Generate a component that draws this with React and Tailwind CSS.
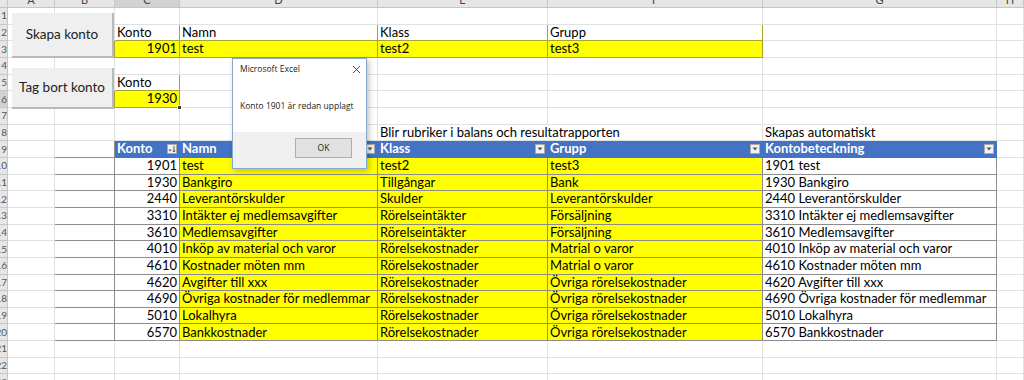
import React from 'react';

const font = { fontFamily: 'Lato, "Open Sans", sans-serif' };

const colW = ['w-[47px]', 'w-[60px]', 'w-[65px]', 'w-[198px]', 'w-[170px]', 'w-[215px]', 'w-[234px]', 'w-[27px]'];
const letters = ['A', 'B', 'C', 'D', 'E', 'F', 'G', 'H'];

const tableRows = [
  ['1901', 'test', 'test2', 'test3', '1901 test'],
  ['1930', 'Bankgiro', 'Tillgångar', 'Bank', '1930 Bankgiro'],
  ['2440', 'Leverantörskulder', 'Skulder', 'Leverantörskulder', '2440 Leverantörskulder'],
  ['3310', 'Intäkter ej medlemsavgifter', 'Rörelseintäkter', 'Försäljning', '3310 Intäkter ej medlemsavgifter'],
  ['3610', 'Medlemsavgifter', 'Rörelseintäkter', 'Försäljning', '3610 Medlemsavgifter'],
  ['4010', 'Inköp av material och varor', 'Rörelsekostnader', 'Matrial o varor', '4010 Inköp av material och varor'],
  ['4610', 'Kostnader möten mm', 'Rörelsekostnader', 'Matrial o varor', '4610 Kostnader möten mm'],
  ['4620', 'Avgifter till xxx', 'Rörelsekostnader', 'Övriga rörelsekostnader', '4620 Avgifter till xxx'],
  ['4690', 'Övriga kostnader för medlemmar', 'Rörelsekostnader', 'Övriga rörelsekostnader', '4690 Övriga kostnader för medlemmar'],
  ['5010', 'Lokalhyra', 'Rörelsekostnader', 'Övriga rörelsekostnader', '5010 Lokalhyra'],
  ['6570', 'Bankkostnader', 'Rörelsekostnader', 'Övriga rörelsekostnader', '6570 Bankkostnader'],
];

// one spreadsheet cell
const Cell = ({ i, children, className = '', right }) => (
  <div
    className={`${colW[i]} shrink-0 h-full flex items-center px-[2px] border-r border-b whitespace-nowrap text-[13px] text-black ${right ? 'justify-end' : ''} ${className || 'border-[#e1e1e1]'}`}
  >
    {children}
  </div>
);

const RowHead = ({ n, active }) => (
  <div className={`w-[8px] shrink-0 h-full flex items-center justify-end overflow-hidden border-r border-b border-[#c6c6c6] text-[10px] text-[#555] ${active ? 'bg-[#d2d2d2]' : 'bg-[#e6e6e6]'}`}>
    <span className="whitespace-nowrap">{n}</span>
  </div>
);

const Row = ({ n, active, children }) => (
  <div className="flex h-[16.67px]">
    <RowHead n={n} active={active} />
    {children}
  </div>
);

const FilterBtn = ({ sort }) => (
  <div className="ml-auto w-[10px] h-[10px] shrink-0 bg-[#f3f3f3] border border-[#a9a9a9] flex items-center justify-center">
    {sort ? (
      <svg width="8" height="8" viewBox="0 0 8 8">
        <path d="M0.5 4.5h3l-1.5 2z" fill="#444" />
        <path d="M6 1v6M4.8 5.6L6 7l1.2-1.4" stroke="#444" strokeWidth="0.9" fill="none" />
      </svg>
    ) : (
      <svg width="6" height="4" viewBox="0 0 6 4">
        <path d="M0.5 0.5h5l-2.5 3z" fill="#555" />
      </svg>
    )}
  </div>
);

const plain = (from, to) =>
  letters.slice(from, to).map((_, k) => <Cell key={k + from} i={k + from} />);

const tb = 'border-[#8c8c8c]';
const yl = 'bg-[#ffff00] border-[#a6a62e]';

const App = () => (
  <div className="relative w-[1024px] h-[380px] overflow-hidden bg-white" style={font}>
    {/* column letters */}
    <div className="flex h-[8px]">
      <div className="w-[8px] shrink-0 h-full bg-[#e6e6e6] border-r border-b border-[#c6c6c6]" />
      {letters.map((l, i) => (
        <div
          key={l}
          className={`${colW[i]} shrink-0 h-full overflow-hidden flex justify-center border-r border-b border-[#c6c6c6] text-[11px] text-[#444] ${i === 2 ? 'bg-[#d2d2d2]' : 'bg-[#e6e6e6]'}`}
        >
          <span className="block leading-[14px] -mt-[7px]">{l}</span>
        </div>
      ))}
    </div>

    <Row n="1">{plain(0, 8)}</Row>
    <Row n="2">
      <Cell i={0} />
      <Cell i={1} />
      <Cell i={2} className="border-[#a6a62e]">Konto</Cell>
      <Cell i={3} className="border-[#a6a62e]">Namn</Cell>
      <Cell i={4} className="border-[#a6a62e]">Klass</Cell>
      <Cell i={5} className="border-[#a6a62e]">Grupp</Cell>
      <Cell i={6} />
      <Cell i={7} />
    </Row>
    <Row n="3">
      <Cell i={0} />
      <Cell i={1} className="border-[#a6a62e]" />
      <Cell i={2} right className={yl}>1901</Cell>
      <Cell i={3} className={yl}>test</Cell>
      <Cell i={4} className={yl}>test2</Cell>
      <Cell i={5} className={yl}>test3</Cell>
      <Cell i={6} />
      <Cell i={7} />
    </Row>
    <Row n="4">{plain(0, 8)}</Row>
    <Row n="5">
      <Cell i={0} />
      <Cell i={1} />
      <Cell i={2} className="border-[#a6a62e]">Konto</Cell>
      {plain(3, 8)}
    </Row>
    <Row n="6" active>
      <Cell i={0} />
      <Cell i={1} className="border-[#a6a62e]" />
      <Cell i={2} right className={`${yl} relative`}>
        1930
        <span className="absolute -right-[3px] -bottom-[3px] w-[5px] h-[5px] bg-[#3a3a3a] border border-white" />
      </Cell>
      {plain(3, 8)}
    </Row>
    <Row n="7">{plain(0, 8)}</Row>
    <Row n="8">
      <Cell i={0} />
      <Cell i={1} />
      <Cell i={2} />
      <Cell i={3} />
      <Cell i={4} className="border-b-[#e1e1e1] border-r-transparent overflow-visible">
        <span className="relative z-10">Blir rubriker i balans och resultatrapporten</span>
      </Cell>
      <Cell i={5} />
      <Cell i={6}>Skapas automatiskt</Cell>
      <Cell i={7} />
    </Row>
    <Row n="9">
      <Cell i={0} />
      <Cell i={1} className={tb} />
      {['Konto', 'Namn', 'Klass', 'Grupp', 'Kontobeteckning'].map((h, k) => (
        <Cell key={h} i={k + 2} className="bg-[#4472c4] border-[#4472c4] font-bold text-white">
          <span className="text-white">{h}</span>
          <FilterBtn sort={k === 0} />
        </Cell>
      ))}
      <Cell i={7} />
    </Row>
    {tableRows.map((r, j) => (
      <Row key={r[0]} n={String(10 + j)}>
        <Cell i={0} />
        <Cell i={1} className={tb} />
        <Cell i={2} right className={tb}>{r[0]}</Cell>
        <Cell i={3} className={`${tb} bg-[#ffff00]`}>{r[1]}</Cell>
        <Cell i={4} className={`${tb} bg-[#ffff00]`}>{r[2]}</Cell>
        <Cell i={5} className={`${tb} bg-[#ffff00]`}>{r[3]}</Cell>
        <Cell i={6} className={tb}>{r[4]}</Cell>
        <Cell i={7} />
      </Row>
    ))}
    <Row n="21">{plain(0, 8)}</Row>
    <Row n="22">{plain(0, 8)}</Row>
    <Row n="23">{plain(0, 8)}</Row>

    {/* form buttons drawn over the sheet */}
    <div className="absolute left-[12px] top-[13px] w-[102px] h-[45px] bg-[#efefef] border-r-2 border-b-2 border-[#b9b9b9] flex items-center justify-center text-[13.5px] text-[#222]">
      Skapa konto
    </div>
    <div className="absolute left-[12px] top-[68px] w-[102px] h-[41px] bg-[#efefef] border-r-2 border-b-2 border-[#b9b9b9] flex items-center justify-center text-[13.5px] text-[#222]">
      Tag bort konto
    </div>

    {/* message box */}
    <div
      className="absolute left-[232px] top-[58px] w-[135px] h-[111px] bg-white border border-[#88a9cf] shadow-[2px_2px_6px_rgba(0,0,0,0.25)] flex flex-col text-[#222]"
      style={{ fontFamily: '"Open Sans", "Noto Sans", sans-serif' }}
    >
      <div className="flex items-center justify-between pl-[7px] pr-[5px] pt-[1px] h-[19px]">
        <span className="text-[8.5px]">Microsoft Excel</span>
        <svg width="9" height="9" viewBox="0 0 9 9">
          <path d="M1 1l7 7M8 1L1 8" stroke="#333" strokeWidth="0.9" />
        </svg>
      </div>
      <div className="flex-1 flex items-center pl-[7px] pt-[3px] text-[8.5px]">Konto 1901 är redan upplagt</div>
      <div className="h-[36px] bg-[#f0f0f0] flex items-start justify-end pt-[6px] pr-[14px]">
        <div className="w-[57px] h-[20px] bg-[#e1e1e1] border border-[#adadad] flex items-center justify-center text-[8.5px]">
          OK
        </div>
      </div>
    </div>
  </div>
);

export default App;
